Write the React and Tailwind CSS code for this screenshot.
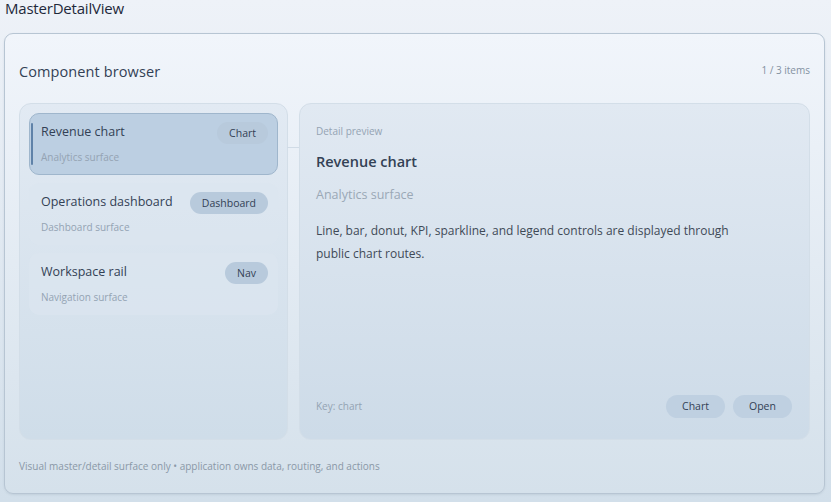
import React from "react"

const items = [
  { title: "Revenue chart", sub: "Analytics surface", tag: "Chart", active: true },
  { title: "Operations dashboard", sub: "Dashboard surface", tag: "Dashboard" },
  { title: "Workspace rail", sub: "Navigation surface", tag: "Nav" },
]

export default function App() {
  return (
    <div
      className="w-[831px] h-[502px] overflow-hidden bg-gradient-to-b from-[#eef2f8] to-[#d2dfea] text-[#1f2937]"
      style={{ fontFamily: '"Open Sans", "Noto Sans", sans-serif' }}
    >
      <div className="px-[5px] h-[33px] text-[15px] leading-[16px] tracking-[-0.2px] text-[#1e293b]">MasterDetailView</div>

      <div className="mx-[4px] w-[821px] h-[461px] rounded-[9px] border border-[#b7c5d3] bg-gradient-to-b from-[#f1f5fb] to-[#d5e1eb] shadow-[0_1px_2px_rgba(100,120,140,0.15)] flex flex-col px-[14px]">
        <div className="flex items-center justify-between h-[69px] pt-[7px]">
          <div className="text-[14.5px] text-[#334155] tracking-[0.1px]">Component browser</div>
          <div className="text-[10px] text-[#8391a1] -mt-[3px]">1 / 3 items</div>
        </div>

        <div className="flex gap-[11px] h-[337px]">
          <div className="relative w-[269px] rounded-[12px] border border-[#d3dee8] bg-gradient-to-b from-[#e2eaf3] to-[#cfdde9] p-[9px] flex flex-col gap-[8px]">
            <div className="absolute right-[-12px] top-[43px] w-[12px] h-px bg-[#d0dbe6]" />
            {items.map((it) => (
              <div
                key={it.title}
                className={
                  it.active
                    ? "relative h-[62px] rounded-[10px] border border-[#9fb6cc] bg-[#bccfe2] pl-[11px] pr-[9px] pt-[8px]"
                    : "relative h-[62px] rounded-[10px] border border-transparent bg-[#dbe5ef]/70 pl-[11px] pr-[9px] pt-[8px]"
                }
              >
                {it.active && <div className="absolute left-[1px] top-[9px] w-[2px] h-[42px] bg-[#5f82a8] rounded" />}
                <div className="flex items-start justify-between">
                  <div className="text-[12.5px] leading-[18px] text-[#334155] pt-[1px]">{it.title}</div>
                  <div className="h-[22px] px-[12px] rounded-full bg-[#b8cadc] text-[10.5px] leading-[22px] text-[#334155]">{it.tag}</div>
                </div>
                <div className="text-[10px] leading-[14px] text-[#94a3b3] mt-[6px]">{it.sub}</div>
              </div>
            ))}
          </div>

          <div className="flex-1 rounded-[12px] border border-[#d3dee8] bg-gradient-to-b from-[#e1e9f2] to-[#cddbe8] px-[16px] pt-[20px] pb-[21px] flex flex-col">
            <div className="text-[10px] leading-[14px] text-[#94a3b3]">Detail preview</div>
            <div className="text-[14.5px] leading-[20px] font-semibold text-[#334155] mt-[14px]">Revenue chart</div>
            <div className="text-[12.5px] leading-[18px] text-[#9aa8b6] mt-[14px]">Analytics surface</div>
            <div className="text-[12px] leading-[23px] text-[#3f4a57] mt-[15px] w-[440px]">
              Line, bar, donut, KPI, sparkline, and legend controls are displayed through public chart routes.
            </div>
            <div className="mt-auto flex items-center justify-between">
              <div className="text-[10px] text-[#94a3b3]">Key: chart</div>
              <div className="flex gap-[8px] mr-[1px]">
                <div className="h-[23px] w-[59px] rounded-full bg-[#bfd0e1] text-[10.5px] leading-[23px] text-center text-[#334155]">Chart</div>
                <div className="h-[23px] w-[59px] rounded-full bg-[#bfd0e1] text-[10.5px] leading-[23px] text-center text-[#334155]">Open</div>
              </div>
            </div>
          </div>
        </div>

        <div className="text-[10px] text-[#8a98a7] mt-[19px]">
          Visual master/detail surface only • application owns data, routing, and actions
        </div>
      </div>
    </div>
  )
}
